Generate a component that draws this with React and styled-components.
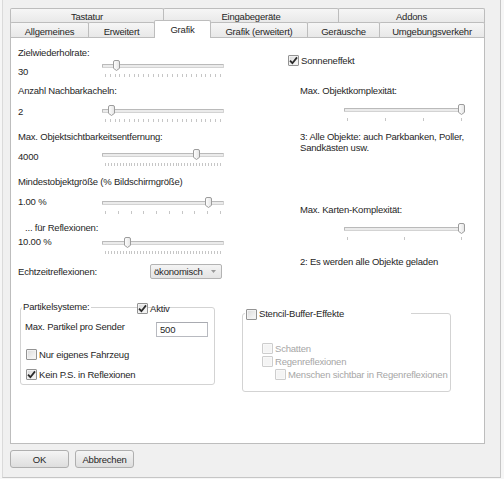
import React from 'react';
import styled, { createGlobalStyle } from 'styled-components';

const Global = createGlobalStyle`
  html, body { margin: 0; padding: 0; background: #f6f6f6; }
  body {
    font-family: "Liberation Sans", Arial, sans-serif;
    font-size: 9.5px;
    letter-spacing: -0.2px;
    color: #262626;
  }
  * { box-sizing: border-box; }
`;

const Window = styled.div`
  margin-left: 2px;
  width: 499px;
  height: 478px;
  background: #f0f0f0;
  border-left: 1px solid #dadada;
  border-right: 1px solid #c6c6c6;
  border-bottom: 1px solid #c6c6c6;
  padding: 8px 0 0 7px;
`;

const TabStrip = styled.div`
  width: 475px;
  display: flex;
  flex-direction: column;
`;

const TabRow = styled.div`
  display: flex;
  height: 15px;
  align-items: flex-end;
  margin-top: ${p => p.$mt || 0}px;
`;

const Tab = styled.div`
  width: ${p => p.$w}px;
  height: ${p => (p.$active ? 18 : 15)}px;
  flex: none;
  margin-right: ${p => (p.$last ? 0 : -1)}px;
  margin-bottom: ${p => (p.$active ? -1 : 0)}px;
  border: 1px solid #bdbdbd;
  border-bottom: none;
  border-radius: 2px 2px 0 0;
  background: ${p => (p.$active ? '#ffffff' : 'linear-gradient(#f6f6f6, #e8e8e8)')};
  display: flex;
  align-items: center;
  justify-content: center;
  padding-top: ${p => p.$pt || 0}px;
  white-space: nowrap;
  position: relative;
  z-index: ${p => (p.$active ? 2 : 1)};
`;

const Panel = styled.div`
  width: 475px;
  height: 407px;
  background: #fff;
  border: 1px solid #bdbdbd;
  padding: 9px 0 0 7px;
`;

const MainGrid = styled.div`
  display: grid;
  grid-template-columns: 270px 1fr;
  height: 232px;
`;

const Column = styled.div`
  display: flex;
  flex-direction: column;
`;

const Setting = styled.div`
  height: ${p => p.$h}px;
  flex: none;
`;

const Label = styled.div`
  line-height: 12px;
  height: 12px;
  white-space: nowrap;
  padding-left: ${p => p.$indent || 0}px;
  margin-top: ${p => p.$mt || 0}px;
`;

const SettingRow = styled.div`
  display: flex;
  align-items: flex-start;
`;

const Value = styled.div`
  width: 84px;
  flex: none;
  line-height: 12px;
  margin-top: ${p => p.$mt || 0}px;
`;

const SliderBox = styled.div`
  position: relative;
  width: ${p => p.$w}px;
  height: 17px;
  flex: none;
  margin-top: ${p => p.$mt || 0}px;
  margin-left: ${p => p.$ml || 0}px;
`;

const Track = styled.div`
  margin-top: 4px;
  height: 4px;
  border: 1px solid #d3d3d3;
  border-top-color: #bababa;
  border-left-color: #bababa;
  background: #ebebeb;
  border-radius: 1px;
`;

const Ticks = styled.div`
  display: flex;
  justify-content: space-between;
  margin: 6px 3px 0;
  height: 3px;
`;

const Tick = styled.span`
  width: 1px;
  height: 3px;
  background: #c6c6c6;
`;

const Thumb = styled.svg`
  position: absolute;
  top: 0;
  width: 7px;
  height: 11px;
`;

function Slider({ width = 122, frac, ticks, mt, ml }) {
  const left = Math.round(frac * (width - 7));
  return (
    <SliderBox $w={width} $mt={mt} $ml={ml}>
      <Track />
      <Ticks>
        {Array.from({ length: ticks }).map((_, i) => (
          <Tick key={i} />
        ))}
      </Ticks>
      <Thumb style={{ left }} viewBox="0 0 7 11">
        <defs>
          <linearGradient id="tg" x1="0" y1="0" x2="1" y2="0">
            <stop offset="0" stopColor="#ffffff" />
            <stop offset="1" stopColor="#e4e4e4" />
          </linearGradient>
        </defs>
        <path
          d="M0.5 2 Q0.5 0.5 2 0.5 H5 Q6.5 0.5 6.5 2 V8.3 L3.5 10.5 L0.5 8.3 Z"
          fill="url(#tg)"
          stroke="#9c9c9c"
          strokeWidth="1"
        />
      </Thumb>
    </SliderBox>
  );
}

const CheckRow = styled.label`
  display: flex;
  align-items: center;
  gap: 2px;
  height: ${p => p.$h || 12}px;
  margin-top: ${p => p.$mt || 0}px;
  margin-left: ${p => p.$ml || 0}px;
  white-space: nowrap;
  color: ${p => (p.$disabled ? '#a6a6a6' : '#262626')};
`;

const Box = styled.span`
  width: 11px;
  height: 11px;
  flex: none;
  border: 1px solid ${p => (p.$disabled ? '#cdcdcd' : '#939393')};
  border-radius: 1px;
  background: ${p => (p.$disabled ? '#f4f4f4' : 'linear-gradient(135deg, #dadada, #fbfbfb)')};
  box-shadow: inset 0 0 0 1px ${p => (p.$disabled ? '#f8f8f8' : '#f2f2f2')};
  display: flex;
  align-items: center;
  justify-content: center;
`;

function Checkbox({ checked, disabled, children, ...rest }) {
  return (
    <CheckRow $disabled={disabled} {...rest}>
      <Box $disabled={disabled}>
        {checked && (
          <svg width="9" height="9" viewBox="0 0 9 9">
            <path d="M1 4.6 L3.4 7.2 L8 1.4" fill="none" stroke="#2b2b2b" strokeWidth="1.8" />
          </svg>
        )}
      </Box>
      {children}
    </CheckRow>
  );
}

const Desc = styled.div`
  line-height: 11px;
  padding-left: 12px;
  margin-top: ${p => p.$mt || 0}px;
`;

const InlineRow = styled.div`
  display: flex;
  align-items: center;
  height: 16px;
`;

const InlineLabel = styled.div`
  width: ${p => p.$w}px;
  flex: none;
  line-height: 12px;
  white-space: nowrap;
  margin-top: ${p => p.$mt || 0}px;
`;

const Select = styled.div`
  width: 72px;
  height: 15px;
  border: 1px solid #b3b3b3;
  border-radius: 2px;
  background: linear-gradient(#f4f4f4, #e4e4e4);
  display: flex;
  align-items: center;
  justify-content: space-between;
  padding: 0 5px 0 3px;
`;

const GroupsRow = styled.div`
  display: flex;
  align-items: flex-start;
  margin-top: 28px;
  padding-left: 2px;
`;

const GroupBox = styled.div`
  position: relative;
  width: ${p => p.$w}px;
  height: ${p => p.$h}px;
  flex: none;
  margin-top: ${p => p.$mt || 0}px;
  margin-left: ${p => p.$ml || 0}px;
  border: 1px solid #d3d3d3;
  border-radius: 3px;
  padding: ${p => p.$pad};
`;

const Legend = styled.div`
  position: absolute;
  top: ${p => p.$top}px;
  left: ${p => p.$left}px;
  width: ${p => (p.$w ? `${p.$w}px` : 'auto')};
  background: #fff;
  padding: 0 1px;
  line-height: 12px;
  white-space: nowrap;
`;

const Overlay = styled.div`
  position: absolute;
  top: ${p => p.$top}px;
  left: ${p => p.$left}px;
`;

const FieldRow = styled.div`
  display: flex;
  align-items: flex-start;
`;

const Input = styled.div`
  width: 52px;
  height: 15px;
  border: 1px solid #b8bac0;
  border-top-color: #a9abb1;
  background: #fff;
  line-height: 13px;
  padding-left: 3px;
`;

const ButtonRow = styled.div`
  display: flex;
  gap: 6px;
  margin-top: 6px;
`;

const Button = styled.div`
  width: 59px;
  height: 18px;
  border: 1px solid #afafaf;
  border-radius: 3px;
  background: linear-gradient(#f5f5f5, #e9e9e9 50%, #dedede);
  display: flex;
  align-items: center;
  justify-content: center;
`;

export default function App() {
  return (
    <>
      <Global />
      <Window>
        <TabStrip>
          <TabRow>
            <Tab $w={154}>Tastatur</Tab>
            <Tab $w={176}>Eingabegeräte</Tab>
            <Tab $w={147} $last>Addons</Tab>
          </TabRow>
          <TabRow $mt={-1}>
            <Tab $w={79} $pt={2}>Allgemeines</Tab>
            <Tab $w={67} $pt={2}>Erweitert</Tab>
            <Tab $w={57} $active>Grafik</Tab>
            <Tab $w={98} $pt={2}>Grafik (erweitert)</Tab>
            <Tab $w={73} $pt={2}>Geräusche</Tab>
            <Tab $w={106} $pt={2} $last>Umgebungsverkehr</Tab>
          </TabRow>
        </TabStrip>
        <Panel>
          <MainGrid>
            <Column>
              <Setting $h={38}>
                <Label>Zielwiederholrate:</Label>
                <SettingRow>
                  <Value $mt={7}>30</Value>
                  <Slider frac={0.095} ticks={25} mt={1} />
                </SettingRow>
              </Setting>
              <Setting $h={46}>
                <Label>Anzahl Nachbarkacheln:</Label>
                <SettingRow>
                  <Value $mt={9}>2</Value>
                  <Slider frac={0.052} ticks={25} mt={8} />
                </SettingRow>
              </Setting>
              <Setting $h={45}>
                <Label>Max. Objektsichtbarkeitsentfernung:</Label>
                <SettingRow>
                  <Value $mt={8}>4000</Value>
                  <Slider frac={0.793} ticks={40} mt={6} />
                </SettingRow>
              </Setting>
              <Setting $h={46}>
                <Label>Mindestobjektgröße (% Bildschirmgröße)</Label>
                <SettingRow>
                  <Value $mt={8}>1.00 %</Value>
                  <Slider frac={0.897} ticks={10} mt={9} />
                </SettingRow>
              </Setting>
              <Setting $h={41}>
                <Label $indent={7}>... für Reflexionen:</Label>
                <SettingRow>
                  <Value $mt={2}>10.00 %</Value>
                  <Slider frac={0.19} ticks={40} mt={3} />
                </SettingRow>
              </Setting>
              <InlineRow>
                <InlineLabel $w={132} $mt={2}>Echtzeitreflexionen:</InlineLabel>
                <Select>
                  <span>ökonomisch</span>
                  <svg width="5" height="3" viewBox="0 0 5 3">
                    <path d="M0 0 H5 L2.5 3 Z" fill="#999" />
                  </svg>
                </Select>
              </InlineRow>
            </Column>
            <Column>
              <Checkbox checked $mt={7}>Sonneneffekt</Checkbox>
              <Label $indent={12} $mt={19}>Max. Objektkomplexität:</Label>
              <Slider width={121} frac={1} ticks={4} mt={7} ml={56} />
              <Desc $mt={10}>
                3: Alle Objekte: auch Parkbanken, Poller,
                <br />
                Sandkästen usw.
              </Desc>
              <Label $indent={12} $mt={51}>Max. Karten-Komplexität:</Label>
              <Slider width={121} frac={1} ticks={3} mt={7} ml={56} />
              <Desc $mt={16}>2: Es werden alle Objekte geladen</Desc>
            </Column>
          </MainGrid>
          <GroupsRow>
            <GroupBox $w={195} $h={78} $pad="14px 0 0 4px">
              <Legend $top={-7} $left={1}>Partikelsysteme:</Legend>
              <Overlay $top={-6} $left={116}>
                <Checkbox checked>Aktiv</Checkbox>
              </Overlay>
              <FieldRow>
                <InlineLabel $w={131} $mt={-1}>Max. Partikel pro Sender</InlineLabel>
                <Input>500</Input>
              </FieldRow>
              <Checkbox $mt={11} $ml={1}>Nur eigenes Fahrzeug</Checkbox>
              <Checkbox checked $mt={8} $ml={1}>Kein P.S. in Reflexionen</Checkbox>
            </GroupBox>
            <GroupBox $w={209} $h={79} $mt={6} $ml={27} $pad="28px 0 0 19px">
              <Legend $top={-7} $left={2} $w={166}>
                <Checkbox $h={14}>Stencil-Buffer-Effekte</Checkbox>
              </Legend>
              <Checkbox disabled $h={13}>Schatten</Checkbox>
              <Checkbox disabled $h={13}>Regenreflexionen</Checkbox>
              <Checkbox disabled $h={13} $ml={13}>Menschen sichtbar in Regenreflexionen</Checkbox>
            </GroupBox>
          </GroupsRow>
        </Panel>
        <ButtonRow>
          <Button>OK</Button>
          <Button>Abbrechen</Button>
        </ButtonRow>
      </Window>
    </>
  );
}
